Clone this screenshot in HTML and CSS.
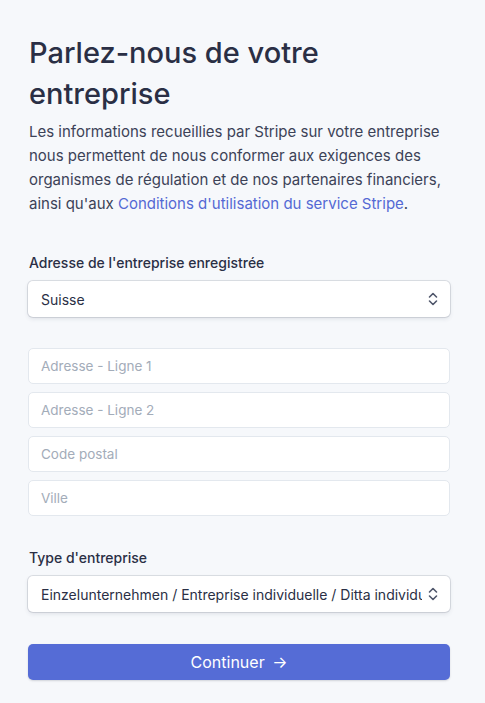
FILE: index.html
```html
<!DOCTYPE html>
<html lang="fr">
<head>
    <meta charset="UTF-8">
    <meta name="viewport" content="width=device-width, initial-scale=1.0">
    <title>Parlez-nous de votre entreprise</title>
    <link rel="stylesheet" href="styles.css">
</head>
<body>
    <div class="page">
        <h1>Parlez-nous de votre entreprise</h1>
        <p class="intro">
            Les informations recueillies par Stripe sur votre entreprise nous permettent de nous conformer aux exigences des organismes de régulation et de nos partenaires financiers, ainsi qu'aux <a href="#">Conditions d'utilisation du service Stripe</a>.
        </p>

        <div class="field">
            <label class="field-label">Adresse de l'entreprise enregistrée</label>
            <div class="select">
                <span class="select-value">Suisse</span>
                <svg class="chevrons" width="10" height="14" viewBox="0 0 10 14">
                    <path d="M1.5 5 L5 1.5 L8.5 5 M1.5 9 L5 12.5 L8.5 9" fill="none" stroke="#4f566b" stroke-width="1.6" stroke-linecap="round" stroke-linejoin="round"/>
                </svg>
            </div>
        </div>

        <div class="address-group">
            <input class="text-input" type="text" placeholder="Adresse - Ligne 1">
            <input class="text-input" type="text" placeholder="Adresse - Ligne 2">
            <input class="text-input" type="text" placeholder="Code postal">
            <input class="text-input" type="text" placeholder="Ville">
        </div>

        <div class="field type-field">
            <label class="field-label">Type d'entreprise</label>
            <div class="select">
                <span class="select-value">Einzelunternehmen / Entreprise individuelle / Ditta individuale</span>
                <svg class="chevrons" width="10" height="14" viewBox="0 0 10 14">
                    <path d="M1.5 5 L5 1.5 L8.5 5 M1.5 9 L5 12.5 L8.5 9" fill="none" stroke="#4f566b" stroke-width="1.6" stroke-linecap="round" stroke-linejoin="round"/>
                </svg>
            </div>
        </div>

        <button class="continue-btn">Continuer <span class="arrow">&#8594;</span></button>
    </div>
</body>
</html>
```

FILE: styles.css
```css
body {
    margin: 0;
    background: #f6f8fb;
    font-family: Inter, "Noto Sans", sans-serif;
    color: #3c4257;
}

.page {
    width: 422px;
    padding: 32px 28px 20px 28px;
}

h1 {
    font-size: 29px;
    font-weight: 500;
    line-height: 41px;
    color: #2a2f45;
    margin: 0 0 0 1px;
}

.intro {
    font-size: 15px;
    line-height: 24px;
    margin: 6px 0 0 1px;
    color: #3c4257;
}

.intro a {
    color: #5469d4;
    text-decoration: none;
}

.field {
    margin-top: 37px;
}

.field-label {
    display: block;
    font-size: 14px;
    font-weight: 500;
    line-height: 20px;
    color: #2a2f45;
    margin: 0 0 8px 1px;
}

.select {
    height: 36px;
    box-sizing: border-box;
    background: #fff;
    border-radius: 5px;
    box-shadow: 0 0 0 1px rgba(60, 66, 87, 0.14), 0 2px 4px rgba(60, 66, 87, 0.12);
    display: flex;
    align-items: center;
    padding: 0 12px 0 13px;
    gap: 6px;
}

.select-value {
    flex: 1;
    font-size: 14px;
    color: #2a2f45;
    white-space: nowrap;
    overflow: hidden;
}

.chevrons {
    flex-shrink: 0;
}

.address-group {
    margin-top: 31px;
    display: flex;
    flex-direction: column;
    gap: 8px;
}

.text-input {
    height: 36px;
    box-sizing: border-box;
    border: 1px solid #e3e8ee;
    border-radius: 5px;
    background: #fff;
    padding: 0 12px;
    font-family: inherit;
    font-size: 13.5px;
    color: #3c4257;
    outline: none;
}

.text-input::placeholder {
    color: #a3acb9;
}

.type-field {
    margin-top: 32px;
}

.continue-btn {
    display: block;
    width: 100%;
    height: 36px;
    margin-top: 32px;
    background: #556cd6;
    color: #fff;
    border: none;
    border-radius: 5px;
    font-family: inherit;
    font-size: 16px;
    font-weight: 400;
    box-shadow: 0 1px 2px rgba(60, 66, 87, 0.2);
}

.arrow {
    margin-left: 3px;
}
```
